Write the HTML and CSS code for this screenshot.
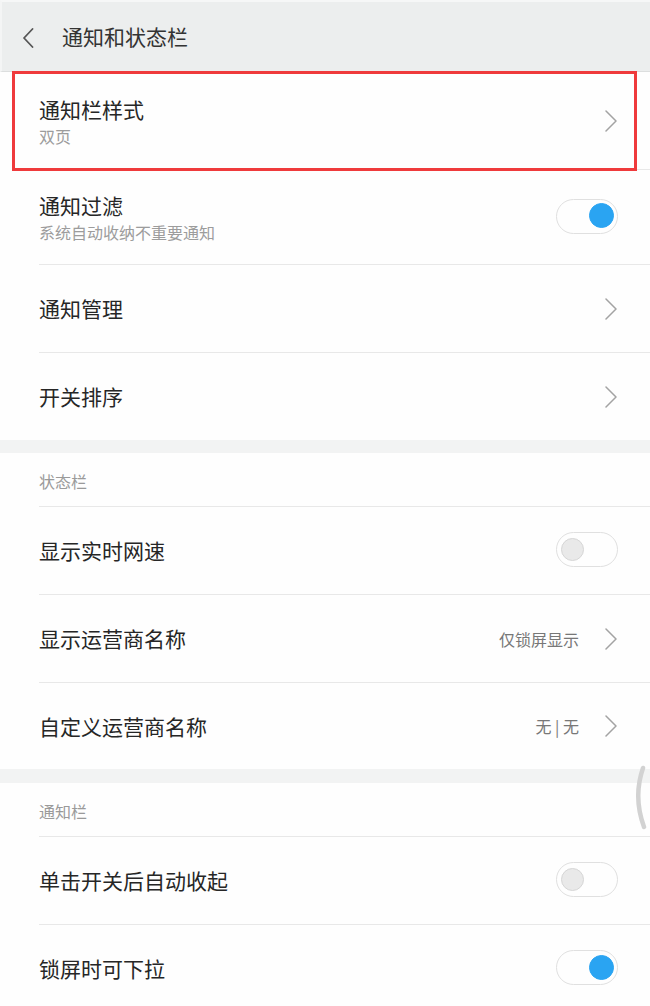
FILE: index.html
```html
<!DOCTYPE html>
<html lang="zh-CN">
<head>
<meta charset="utf-8">
<title>通知和状态栏</title>
<link rel="stylesheet" href="styles.css">
</head>
<body>
<div class="screen">
  <header class="topbar">
    <svg class="back" width="12" height="20" viewBox="0 0 12 20"><path d="M10.5 1 L2 10 L10.5 19" fill="none" stroke="#555" stroke-width="1.8" stroke-linecap="round" stroke-linejoin="round"/></svg>
    <h1 class="topbar-title">通知和状态栏</h1>
  </header>

  <div class="row row-first">
    <div class="text"><div class="title">通知栏样式</div><div class="sub">双页</div></div>
    <svg class="chev" width="12" height="22" viewBox="0 0 12 22"><path d="M1 1 L11 11 L1 21" fill="none" stroke="#a3a3a3" stroke-width="1.5" stroke-linecap="round" stroke-linejoin="round"/></svg>
    <div class="mark"></div>
  </div>
  <div class="row row-sub">
    <div class="text"><div class="title">通知过滤</div><div class="sub">系统自动收纳不重要通知</div></div>
    <div class="switch on"><span class="knob"></span></div>
  </div>
  <div class="row">
    <div class="text"><div class="title">通知管理</div></div>
    <svg class="chev" width="12" height="22" viewBox="0 0 12 22"><path d="M1 1 L11 11 L1 21" fill="none" stroke="#a3a3a3" stroke-width="1.5" stroke-linecap="round" stroke-linejoin="round"/></svg>
  </div>
  <div class="row last">
    <div class="text"><div class="title">开关排序</div></div>
    <svg class="chev" width="12" height="22" viewBox="0 0 12 22"><path d="M1 1 L11 11 L1 21" fill="none" stroke="#a3a3a3" stroke-width="1.5" stroke-linecap="round" stroke-linejoin="round"/></svg>
  </div>

  <div class="band"></div>
  <div class="section-label">状态栏</div>
  <div class="row">
    <div class="text"><div class="title">显示实时网速</div></div>
    <div class="switch"><span class="knob"></span></div>
  </div>
  <div class="row">
    <div class="text"><div class="title">显示运营商名称</div></div>
    <span class="value">仅锁屏显示</span>
    <svg class="chev" width="12" height="22" viewBox="0 0 12 22"><path d="M1 1 L11 11 L1 21" fill="none" stroke="#a3a3a3" stroke-width="1.5" stroke-linecap="round" stroke-linejoin="round"/></svg>
  </div>
  <div class="row last short">
    <div class="text"><div class="title">自定义运营商名称</div></div>
    <span class="value">无 | 无</span>
    <svg class="chev" width="12" height="22" viewBox="0 0 12 22"><path d="M1 1 L11 11 L1 21" fill="none" stroke="#a3a3a3" stroke-width="1.5" stroke-linecap="round" stroke-linejoin="round"/></svg>
  </div>

  <div class="band band-wide"></div>
  <div class="section-label">通知栏</div>
  <div class="row">
    <div class="text"><div class="title">单击开关后自动收起</div></div>
    <div class="switch"><span class="knob"></span></div>
  </div>
  <div class="row last">
    <div class="text"><div class="title">锁屏时可下拉</div></div>
    <div class="switch on"><span class="knob"></span></div>
  </div>

  <svg class="fastscroll" width="18" height="66" viewBox="0 0 18 66"><path d="M11 3 Q1 32 12 62" fill="none" stroke="#d2d2d2" stroke-width="4.5" stroke-linecap="round"/></svg>
</div>
</body>
</html>
```

FILE: styles.css
```css
html, body {
  margin: 0;
  padding: 0;
  background: #fefefe;
}

body {
  font-family: "Noto Sans CJK SC", "Noto Sans", sans-serif;
  color: #262626;
}

.screen {
  position: relative;
  width: 650px;
  height: 1006px;
  overflow: hidden;
  background: #fefefe;
}

.topbar {
  box-sizing: border-box;
  height: 72px;
  display: flex;
  align-items: center;
  background: #eceeee;
  border-top: 2px solid #f6f7f7;
  border-left: 2px solid #f4f5f5;
  border-bottom: 1px solid #dcdede;
  padding-left: 20px;
}

.back {
  display: block;
  margin-top: 3px;
}

.topbar-title {
  margin: 0 0 0 28px;
  font-size: 21px;
  font-weight: 400;
  color: #333;
  line-height: 1.5;
}

.row {
  position: relative;
  box-sizing: border-box;
  height: 88px;
  margin-left: 39px;
  padding-right: 32px;
  display: flex;
  align-items: center;
  border-bottom: 1px solid #e8e8e8;
}

.row.last {
  border-bottom: none;
  height: 87px;
}

.row.short {
  height: 86px;
}

.row-first {
  height: 98px;
  padding-top: 1px;
}

.row-sub {
  height: 95px;
}

.text {
  flex: 1;
  display: flex;
  flex-direction: column;
}

.title {
  font-size: 21px;
  line-height: 31px;
  color: #262626;
}

.sub {
  font-size: 16px;
  line-height: 23px;
  color: #9c9c9c;
}

.value {
  font-size: 16px;
  line-height: 24px;
  color: #777;
  margin-right: 26px;
}

.chev {
  display: block;
  margin-right: 1px;
}

.switch {
  position: relative;
  box-sizing: border-box;
  width: 62px;
  height: 35px;
  border-radius: 18px;
  border: 1.5px solid #e0e0e0;
  background: #fefefe;
  margin-top: -2px;
}

.knob {
  position: absolute;
  top: 4.5px;
  left: 3.5px;
  width: 23px;
  height: 23px;
  border-radius: 50%;
  box-sizing: border-box;
  background: #e9e9e9;
  border: 1px solid #d6d6d6;
}

.switch.on .knob {
  left: auto;
  right: 3px;
  width: 25px;
  height: 25px;
  top: 3.5px;
  background: #2aa4f2;
  border-color: #2aa4f2;
}

.mark {
  position: absolute;
  left: -27px;
  top: -1px;
  width: 625px;
  height: 100px;
  box-sizing: border-box;
  border: 3px solid #ef3a3c;
  pointer-events: none;
}

.band {
  height: 13px;
  background: #f2f3f3;
}

.band-wide {
  height: 14px;
}

.section-label {
  box-sizing: border-box;
  height: 54px;
  margin-left: 39px;
  display: flex;
  align-items: center;
  padding-top: 2px;
  font-size: 16px;
  line-height: 24px;
  color: #9a9a9a;
  border-bottom: 1px solid #e8e8e8;
}

.fastscroll {
  position: absolute;
  left: 632px;
  top: 765px;
}
```
